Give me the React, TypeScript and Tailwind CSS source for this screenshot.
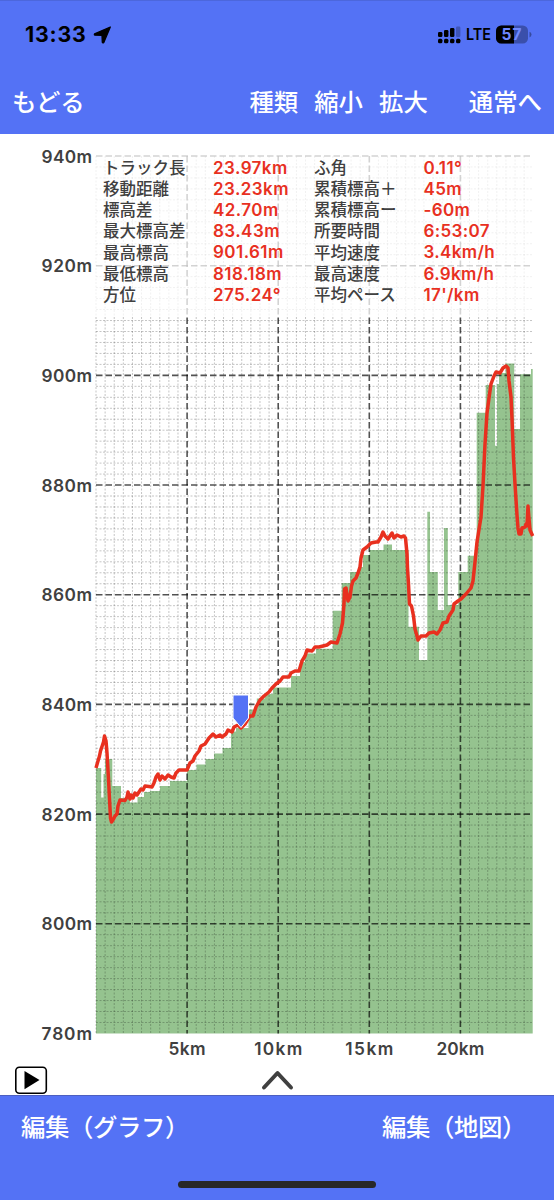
const CHART = { left: 96, right: 532.7, top: 22, bottom: 899.5 };
const PX_PER_KM = 18.22;
const PX_PER_METER = 5.484;

const elevations = [940, 920, 900, 880, 860, 840, 820, 800, 780];
const distances = [5, 10, 15, 20];

const toX = (km: number) => CHART.left + km * PX_PER_KM;
const toY = (m: number) => CHART.top + (940 - m) * PX_PER_METER;

// [start x, top y] of every terrain column
const terrain: [number, number][] = [
  [96, 634], [101.2, 663.5], [103.5, 640], [105, 625], [112.3, 652], [121, 664], [130, 668.5],
  [137.5, 663], [144, 658], [150, 657], [160, 652], [170, 647], [187, 636], [196.5, 630.5],
  [205.5, 625], [214, 619.5], [222.5, 614], [231, 597.5], [236, 594], [248.5, 575.5],
  [256.8, 564.5], [265, 560], [273, 553.5], [291, 542], [300, 528], [305, 519.5],
  [316, 514.8], [332.7, 476.7], [341.7, 449], [350, 438], [358, 433], [363, 421], [369.5, 416],
  [383.5, 410.5], [392, 416], [408.5, 492.7], [419, 526], [427.3, 377.7], [430, 438],
  [437.8, 476], [444, 394], [447.8, 471], [458.3, 438], [467.7, 421.7], [476.7, 278.7],
  [485.7, 251], [495, 311.7], [497, 250], [499, 239], [505.5, 229.5], [514.2, 295],
  [520, 240.3], [531, 235],
];

const track =
  'M96 634L98 627L99.5 622L100.5 617L102.5 611L103.5 608L104.5 602L106 607L107 619L108.5 645L109.5 665L110.5 684L111.5 688L113.5 685L115 682L117 680L118 672L120 666L125 666.5L127 663L128 658L130 665L131 661L133 664L135 659L137 661L139 658L141 655L143 656L145 652L149 652.5L152 653L154 649L156 643L158 640L160 646L162 642L165 645L168 641L171 643L174 644L176 639L179 636L187 636L190 629L193 627L195 622L199 617L201 612L205 610L209 604L213 600L216 603L220 601L222 603L226 600L228 596L232 598L234 593L238 591L241 594L245 590L248 585L250 582L253 582L256 573L260 566L264 562L269 558L272 554L276 550L280 547L283 543L289 543L291 539L295 537L299 537L302 527L305 522L307 516L312 517L315 513L319 513L323 512L327 511L331 508L337 509L340 500L342.5 489L344 470L344.5 455L346 454L348 467L350 463L351.5 452L353 447L356 444L358 439L360 433L361 424L363 416L367 413L371 409L376 408L378 408L381 403L383 398L385 402L388 405L392 399L394 404L397 401L401 403L404 402L405.5 404L407 420L407.5 434L408.5 450L409.5 470L411.5 472L413.5 482L415 495L417 502L418 506L421 502L426 502L429 499L434 498L437 500L440 496L443 489L447 488L449 482L453 476L454 470L458 467L461 465L466 460L471 454L473 447L475 428L477 408L481 383L483 352L485 310L487 279L489 264L491 250L494 242L496 238L500 239L503 234L506 232L508 234L509 247L511 263L512 285L513.5 324L515 350L517 381L518 394L519 400L521 400L522 394L525 393L526 390L527 392L528 372L529 385L530 396L532.7 402';

const terrainPath =
  `M${CHART.left} ${CHART.bottom}` +
  terrain.map(([x, y]) => `H${x}V${y}`).join('') +
  `H${CHART.right}V${CHART.bottom}Z`;

const stats = [
  ['トラック長', '23.97km', 'ふ角', '0.11°'],
  ['移動距離', '23.23km', '累積標高＋', '45m'],
  ['標高差', '42.70m', '累積標高ー', '-60m'],
  ['最大標高差', '83.43m', '所要時間', '6:53:07'],
  ['最高標高', '901.61m', '平均速度', '3.4km/h'],
  ['最低標高', '818.18m', '最高速度', '6.9km/h'],
  ['方位', '275.24°', '平均ペース', "17'/km"],
];

function StatusBar() {
  return (
    <div className="flex h-[67px] items-center pl-[25px] pr-[22px] text-black">
      <span className="text-[21.3px] font-bold tracking-[0.8px]">13:33</span>
      <svg className="ml-[6px] h-[18px] w-[19px]" viewBox="0 0 19 18">
        <path
          d="M17.3 1L1.6 7.8Q1 9 2 9.2L9 9.3L9.3 16.3Q9.8 17.3 10.8 16.5Z"
          fill="currentColor"
          stroke="currentColor"
          strokeWidth="1.3"
          strokeLinejoin="round"
        />
      </svg>
      <svg className="ml-auto h-5 w-[94px]" viewBox="0 0 94 20">
        <rect x="0" y="7" width="4.4" height="5" rx="1.3" />
        <rect x="6" y="5" width="4.4" height="7" rx="1.3" />
        <rect x="12" y="3" width="4.4" height="9" rx="1.3" />
        <rect x="18" y="1.5" width="4.4" height="10.5" rx="1.3" opacity=".25" />
        {[0, 6, 12, 18].map((x) => (
          <rect key={x} x={x} y="13.8" width="4.4" height="4.4" rx="1.5" />
        ))}
        <text x="28" y="15" fontSize="15.5" fontWeight="600" textLength="25" lengthAdjust="spacingAndGlyphs">
          LTE
        </text>
        <rect x="58" y="0.5" width="32" height="18" rx="5.2" opacity=".3" />
        <path d="M63.2 .5H76V18.5H63.2A5.2 5.2 0 0 1 58 13.3V5.7A5.2 5.2 0 0 1 63.2 .5Z" />
        <path d="M91.5 6.8Q93.5 7.5 93.5 9.5T91.5 12.5Z" opacity=".35" />
        <text x="63.5" y="15" fontSize="15.5" fontWeight="700" fill="#6f88ff" textLength="20">57</text>
      </svg>
    </div>
  );
}

function StatsPanel() {
  return (
    <div className="absolute left-[95px] top-[16px] h-[166px] w-[439px] bg-white/75 pl-2 pt-[7.5px]">
      {stats.map((row) => (
        <div
          key={row[0]}
          className="grid h-[21.2px] grid-cols-[110px_101px_109.5px_1fr] items-center whitespace-nowrap text-[16.5px] font-medium leading-none text-[#404040]"
        >
          <span>{row[0]}</span>
          <span className="text-[17px] font-semibold tracking-[0.45px] text-[#e8301f]">{row[1]}</span>
          <span>{row[2]}</span>
          <span className="text-[17px] font-semibold tracking-[0.35px] text-[#e8301f]">{row[3]}</span>
        </div>
      ))}
    </div>
  );
}

function ElevationChart() {
  const minorX = Array.from({ length: 48 }, (_, i) => i / 2).filter((km) => km % 5 !== 0 || km === 0);
  const minorY = Array.from({ length: 80 }, (_, i) => 780 + i * 2).filter((m) => m % 20 !== 0);

  return (
    <svg className="block h-[961px] w-[554px]" viewBox="0 0 554 961" fill="none">
      <path d={terrainPath} fill="#95c38f" />

      <g stroke="#000" strokeOpacity=".23" strokeDasharray="2 1.5">
        {minorX.map((km) => (
          <path key={km} d={`M${toX(km)} ${CHART.top}V${CHART.bottom}`} />
        ))}
        {minorY.map((m) => (
          <path key={m} d={`M${CHART.left} ${toY(m)}H${CHART.right}`} />
        ))}
      </g>

      <g stroke="#000" strokeOpacity=".68" strokeWidth="1.6" strokeDasharray="6.5 3">
        {distances.map((km) => (
          <path key={km} d={`M${toX(km)} ${CHART.top}V${CHART.bottom}`} />
        ))}
        {elevations.slice(0, -1).map((m) => (
          <path key={m} d={`M${CHART.left} ${toY(m)}H${CHART.right}`} />
        ))}
      </g>

      <path d={track} stroke="#e8301f" strokeWidth="3.5" strokeLinejoin="round" />
      <path d="M233 561H248.5V584L241 593.5L233 584Z" fill="#5472f5" stroke="#fff" strokeWidth="1" />

      <g fill="#404040" fontSize="17.3" fontWeight="600">
        {elevations.map((m) => (
          <text key={m} x="92" y={toY(m) + 6.5} textAnchor="end" textLength="50.5">
            {m}m
          </text>
        ))}
        {distances.map((km) => (
          <text key={km} x={toX(km)} y="921" textAnchor="middle" textLength={km < 10 ? 37 : 48}>
            {km}km
          </text>
        ))}
      </g>

      <rect x="15.8" y="933.3" width="30.5" height="26" rx="3.5" stroke="#000" strokeWidth="1.6" />
      <path d="M24.5 937V955.3L39.5 946Z" fill="#000" />
      <path d="M264 953.5L277.5 939L291 953.5" stroke="#404040" strokeWidth="4" strokeLinecap="round" strokeLinejoin="round" />
    </svg>
  );
}

export default function App() {
  return (
    <div className="flex h-[1200px] w-[554px] flex-col overflow-hidden bg-white font-['Inter','Noto_Sans_CJK_JP',sans-serif]">
      <header className="h-[134px] border-t border-[#4c67dc] bg-[#5472f5]">
        <StatusBar />
        <nav className="flex h-[66px] items-center whitespace-nowrap pl-3 pr-[12px] pt-[2px] text-[24.4px] font-medium text-white">
          <span>もどる</span>
          <span className="ml-auto">種類</span>
          <span className="ml-4">縮小</span>
          <span className="ml-4">拡大</span>
          <span className="ml-[41px]">通常へ</span>
        </nav>
      </header>

      <main className="relative h-[961px]">
        <ElevationChart />
        <StatsPanel />
      </main>

      <footer className="flex h-[105px] flex-col items-center justify-between border-t border-[#4c5fc0] bg-[#5472f5] pb-[12px] pt-[12.5px]">
        <div className="flex w-full justify-between whitespace-nowrap pl-[21px] pr-[28px] text-[24.4px] font-medium leading-9 tracking-[-0.4px] text-white">
          <span>編集（グラフ）</span>
          <span>編集（地図）</span>
        </div>
        <div className="h-[7px] w-[198px] rounded-full bg-[#282828]" />
      </footer>
    </div>
  );
}
